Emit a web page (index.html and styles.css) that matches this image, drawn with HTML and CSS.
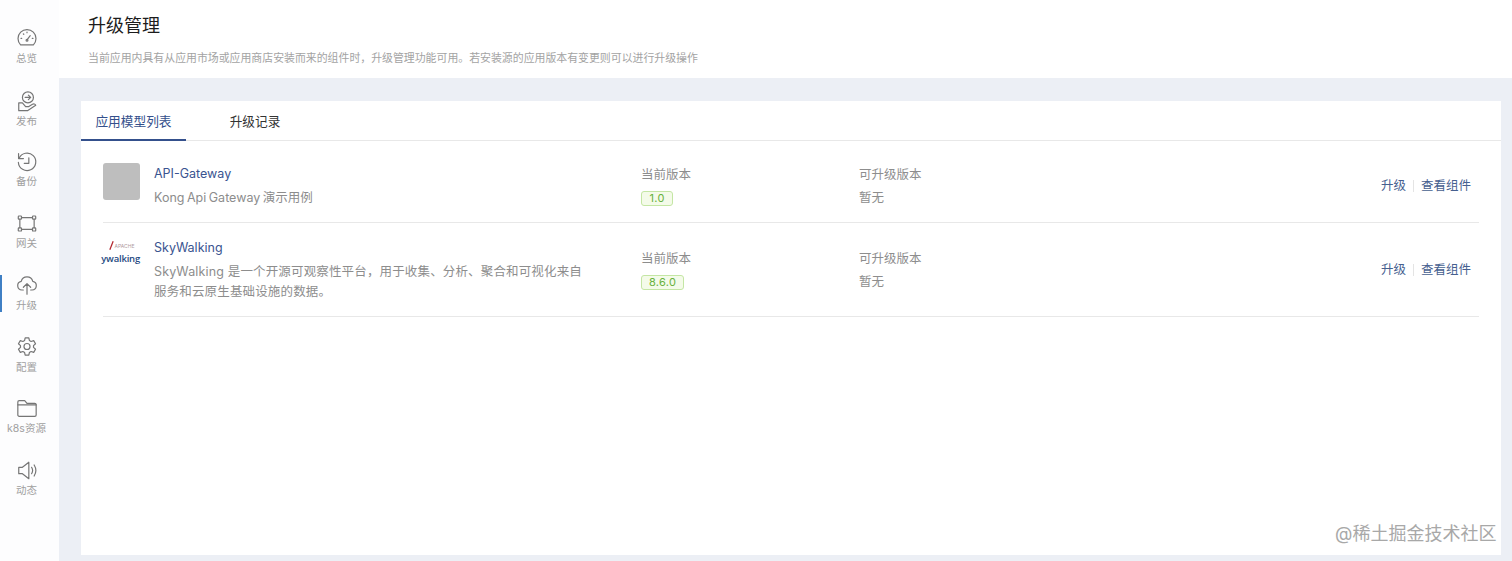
FILE: index.html
```html
<!DOCTYPE html>
<html lang="zh-CN">
<head>
  <meta charset="UTF-8" />
  <title>升级管理</title>
  <link rel="stylesheet" href="styles.css">
</head>
<body>

  <nav class="sidebar">
    <a class="nav-item" href="#">
      <svg viewBox="0 0 24 24"><path d="M5 20A9.800 9.800 0 1 1 19 20Z"/><path d="M12 14.500l3.500-4.500M5.500 13h.7M8 8l.5.5M12 6v.7M17.800 13h.7"/><circle cx="12" cy="15" r="1"/></svg>
      <span>总览</span>
    </a>
    <a class="nav-item item-publish" href="#">
      <svg viewBox="0 0 24 24"><circle cx="13" cy="7.500" r="6"/><path d="M10 7.500h6M13.500 5l2.500 2.500-2.500 2.500"/><path d="M3 13.500v8.500h9.500l9-6c-.8-1.500-2.200-1.600-3.500-.9l-4 2.400h-3.500l-3.500-4Z"/></svg>
      <span>发布</span>
    </a>
    <a class="nav-item" href="#">
      <svg viewBox="0 0 24 24"><path d="M3.400 8.500A9.500 9.500 0 1 1 2.600 13"/><path d="M2.800 3.500v5.300h5.300"/><path d="M14 8v6H9"/></svg>
      <span>备份</span>
    </a>
    <a class="nav-item" href="#">
      <svg viewBox="0 0 24 24"><path d="M6 5.500h12M6 18.500h12M4.200 7.500v9M19.800 7.500v9"/><rect x="2.500" y="3.800" width="3.500" height="3.500" rx=".7"/><rect x="18" y="3.800" width="3.500" height="3.500" rx=".7"/><rect x="2.500" y="16.700" width="3.500" height="3.500" rx=".7"/><rect x="18" y="16.700" width="3.500" height="3.500" rx=".7"/></svg>
      <span>网关</span>
    </a>
    <a class="nav-item active" href="#">
      <svg viewBox="0 0 24 24"><path d="M8 18H6.500a4.800 4.800 0 0 1-.8-9.500 6.500 6.500 0 0 1 12.600 0 4.800 4.800 0 0 1-.8 9.500H16"/><path d="M12 22.500V11.500M8 15l4-4 4 4"/></svg>
      <span>升级</span>
    </a>
    <a class="nav-item" href="#">
      <svg viewBox="0 0 24 24"><path d="M10 2.500h4l.6 2.900 1.900 1.100 2.800-.9 2 3.400-2.200 2v2l2.200 2-2 3.400-2.800-.9-1.900 1.100-.6 2.900h-4l-.6-2.900-1.900-1.100-2.800.9-2-3.400 2.200-2v-2l-2.200-2 2-3.400 2.800.9 1.900-1.100Z"/><circle cx="12" cy="12" r="3.300"/></svg>
      <span>配置</span>
    </a>
    <a class="nav-item" href="#">
      <svg viewBox="0 0 24 24"><path d="M2 5a1.500 1.500 0 0 1 1.500-1.500h6L12 6.500h8.500A1.500 1.500 0 0 1 22 8v11a1.500 1.500 0 0 1-1.500 1.500h-17A1.500 1.500 0 0 1 2 19Z"/><path d="M2 8h20"/></svg>
      <span>k8s资源</span>
    </a>
    <a class="nav-item" href="#">
      <svg viewBox="0 0 24 24"><path d="M3 8.500h4L14 3v18l-7-5.500H3Z"/><path d="M17 8.500c1.300 2 1.300 5 0 7M19.800 6c2.200 3.500 2.200 8.500 0 12"/></svg>
      <span>动态</span>
    </a>
  </nav>

  <div class="main">
    <header class="page-header">
      <h2>升级管理</h2>
      <p>当前应用内具有从应用市场或应用商店安装而来的组件时，升级管理功能可用。若安装源的应用版本有变更则可以进行升级操作</p>
    </header>

    <div class="content">
      <section class="card">
        <div class="tabs">
          <a class="tab active" href="#">应用模型列表</a>
          <a class="tab" href="#">升级记录</a>
        </div>

        <div class="list">
          <div class="row row-short">
            <div class="logo-empty"></div>
            <div class="info">
              <a class="app-name" href="#">API-Gateway</a>
              <p>Kong Api Gateway 演示用例</p>
            </div>
            <div class="version">
              <span class="label">当前版本</span>
              <span class="tag">1.0</span>
            </div>
            <div class="version">
              <span class="label">可升级版本</span>
              <span class="none">暂无</span>
            </div>
            <div class="actions">
              <a href="#">升级</a>
              <a href="#">查看组件</a>
            </div>
          </div>

          <div class="row row-tall">
            <div class="logo-sky">
              <span class="logo-top"><svg viewBox="0 0 6 10"><path d="M1 10L5 0"/></svg>APACHE</span>
              <span class="logo-word">ywalking</span>
            </div>
            <div class="info">
              <a class="app-name" href="#">SkyWalking</a>
              <p>SkyWalking 是一个开源可观察性平台，用于收集、分析、聚合和可视化来自服务和云原生基础设施的数据。</p>
            </div>
            <div class="version">
              <span class="label">当前版本</span>
              <span class="tag">8.6.0</span>
            </div>
            <div class="version">
              <span class="label">可升级版本</span>
              <span class="none">暂无</span>
            </div>
            <div class="actions">
              <a href="#">升级</a>
              <a href="#">查看组件</a>
            </div>
          </div>
        </div>
      </section>
    </div>
  </div>

  <div class="watermark">@稀土掘金技术社区</div>

</body>
</html>
```

FILE: styles.css
```css
* {
  box-sizing: border-box;
}
body {
  margin: 0;
  height: 561px;
  display: flex;
  overflow: hidden;
  font-family: Inter, 'Noto Sans CJK SC', sans-serif;
  background: #fff;
}
a {
  text-decoration: none;
}
.sidebar {
  width: 59px;
  flex: none;
  padding-top: 15px;
  background: #fdfdfe;
}
.nav-item {
  position: relative;
  height: 61.800px;
  padding-right: 6px;
  display: flex;
  flex-direction: column;
  align-items: center;
  justify-content: center;
  gap: 2.500px;
  color: #a0a0a0;
  font-size: 10.500px;
  line-height: 14px;
  white-space: nowrap;
}
.nav-item svg {
  width: 22px;
  height: 23px;
  fill: none;
  stroke: #757575;
  stroke-width: 1.300;
  stroke-linejoin: round;
  stroke-linecap: round;
}
.item-publish {
  padding-top: 4px;
}
.nav-item.active::before {
  content: "";
  position: absolute;
  left: 0;
  top: 13px;
  width: 2px;
  height: 37px;
  background: #3f7fc4;
}
.main {
  flex: 1;
  min-width: 0;
  display: flex;
  flex-direction: column;
}
.page-header {
  height: 78px;
  padding: 14px 29px 0;
  background: #fff;
}
.page-header h2 {
  margin: 0;
  font-size: 18px;
  line-height: 24px;
  font-weight: 400;
  color: #1c1c1c;
}
.page-header p {
  margin: 10px 0 0;
  font-size: 10.900px;
  line-height: 20px;
  color: #a3a3a3;
}
.content {
  flex: 1;
  padding: 23px 11px 6px 22px;
  background: #eceff5;
}
.card {
  height: 100%;
  background: #fff;
}
.tabs {
  display: flex;
  height: 40px;
  border-bottom: 1px solid #e8e8e8;
}
.tab {
  width: 105px;
  height: 40px;
  margin-right: 22px;
  line-height: 41px;
  text-align: center;
  font-size: 12.700px;
  color: #333;
}
.tab:last-child {
  width: 96px;
  margin-left: -1px;
}
.tab.active {
  color: #34508c;
  border-bottom: 2px solid #34508c;
}
.list {
  margin: 0 22px;
}
.row {
  display: grid;
  grid-template-columns: 51px 487px 218px 1fr auto;
  align-items: center;
  border-bottom: 1px solid #e8e8e8;
}
.row-short {
  height: 82px;
  padding-top: 11px;
}
.row-tall {
  height: 94px;
  padding-top: 3px;
}
.logo-empty {
  width: 37px;
  height: 37px;
  margin-top: -12px;
  border-radius: 3px;
  background: #bebebe;
}
.logo-sky {
  width: 37px;
  height: 37px;
  margin-top: -28px;
  display: flex;
  flex-direction: column;
  align-items: center;
}
.logo-top {
  display: flex;
  align-items: center;
  gap: 1px;
  height: 14px;
  font-size: 5px;
  color: #b09a9e;
}
.logo-top svg {
  width: 5px;
  height: 9px;
  fill: none;
  stroke: #b3262e;
  stroke-width: 1.500;
}
.logo-word {
  align-self: flex-end;
  font-family: 'Open Sans', sans-serif;
  font-size: 9.500px;
  line-height: 12px;
  font-weight: 600;
  letter-spacing: -.2px;
  color: #24497f;
}
.info {
  width: 430px;
  margin-top: -1px;
}
.app-name {
  display: block;
  font-size: 12.500px;
  line-height: 18px;
  color: #3a5490;
}
.info p {
  margin: 5px 0 0;
  font-size: 12.500px;
  line-height: 20px;
  letter-spacing: .15px;
  color: #8d8d8d;
}
.row-short .info p {
  letter-spacing: 0;
  word-spacing: -1px;
}
.version {
  display: flex;
  flex-direction: column;
  align-items: flex-start;
  gap: 5px;
  margin-top: -1px;
}
.label,
.none {
  font-size: 12.500px;
  line-height: 18px;
  color: #8d8d8d;
}
.tag {
  height: 15px;
  margin: 2px 0 1px;
  padding: 0 7px;
  border: 1px solid #c4e6a4;
  border-radius: 3px;
  background: #f4fbe9;
  font-size: 11px;
  line-height: 13px;
  letter-spacing: .3px;
  color: #68b13c;
}
.row-short .tag {
  padding: 0 7.500px;
}
.actions {
  display: flex;
  align-items: center;
  margin: -2px 8px 0 0;
  font-size: 12.500px;
  line-height: 12px;
}
.actions a {
  color: #46608f;
}
.actions a + a {
  margin-left: 7px;
  padding-left: 7px;
  border-left: 1px solid #e4e4e4;
}
.watermark {
  position: absolute;
  left: 1335px;
  top: 521px;
  font-size: 18px;
  line-height: 26px;
  color: #a8a8a8;
}
```
